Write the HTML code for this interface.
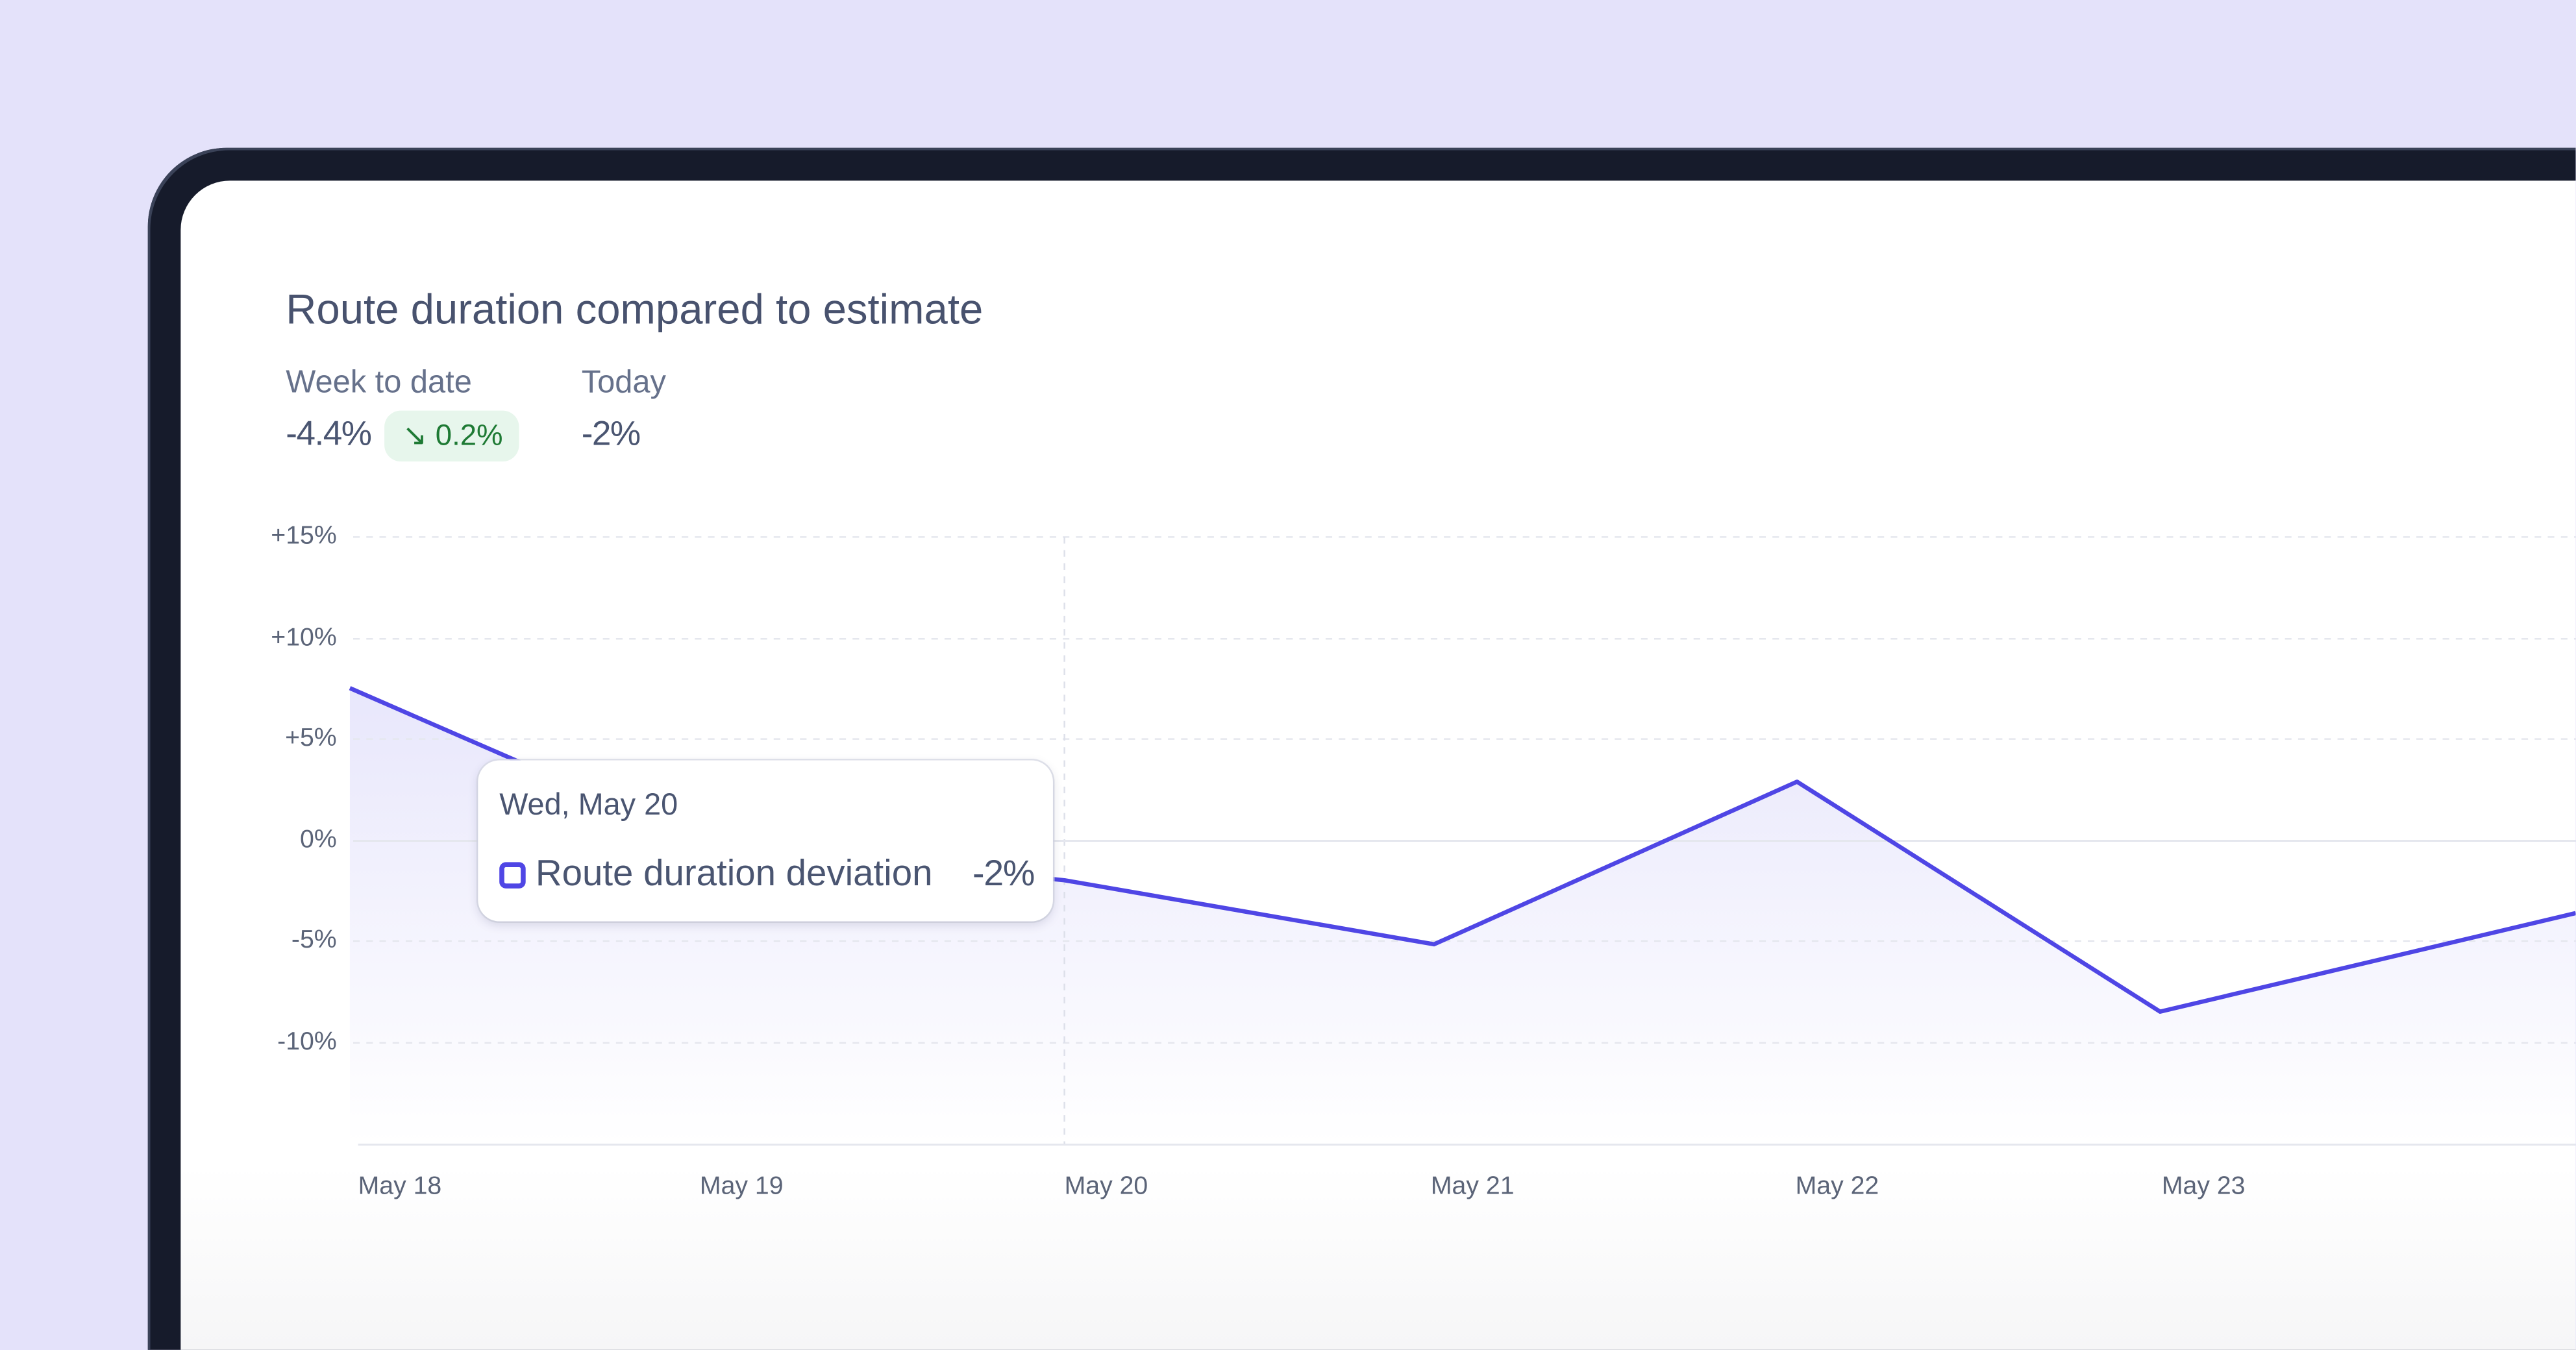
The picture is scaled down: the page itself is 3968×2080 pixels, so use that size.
<!DOCTYPE html>
<html><head><meta charset="utf-8">
<style>
html{margin:0;padding:0;width:3968px;height:2080px;overflow:hidden;}
body{margin:0;padding:0;width:3968px;height:2080px;overflow:hidden;background:#e4e2fa;font-family:"Liberation Sans",sans-serif;position:relative;}
#w{position:absolute;left:0;top:0;width:1568px;height:822px;overflow:hidden;transform:scale(2.5303);transform-origin:0 0;}
.bezel{position:absolute;left:90px;top:90px;width:1478px;height:732px;background:#161b2b;border-radius:48px 0 0 0;box-shadow:inset 1.5px 1.5px 0 0 #3a4258;}
.screen{position:absolute;left:110px;top:110px;width:1458px;height:712px;background:linear-gradient(#fff 0,#fff 600px,#f6f6f7 712px);border-radius:30px 0 0 0;overflow:hidden;}
.t{position:absolute;white-space:nowrap;color:#4a5571;}
.ax{position:absolute;font-size:15.5px;color:#5b6478;white-space:nowrap;}
</style></head><body><div id="w">
<div class="bezel"></div>
<div class="screen"></div>
<div class="t" style="left:174px;top:175px;font-size:25.8px;color:#48526e;">Route duration compared to estimate</div>
<div class="t" style="left:174px;top:223px;font-size:19.3px;color:#66718b;">Week to date</div>
<div class="t" style="left:354px;top:223px;font-size:19.3px;color:#66718b;">Today</div>
<div class="t" style="left:174px;top:253px;font-size:21px;letter-spacing:-0.6px;">-4.4%</div>
<div style="position:absolute;left:234px;top:250px;width:82px;height:31px;border-radius:10px;background:#e7f6ec;"></div>
<div class="t" style="left:245px;top:255px;font-size:18px;color:#1e7a34;">↘ 0.2%</div>
<div class="t" style="left:354px;top:253px;font-size:21px;letter-spacing:-0.6px;">-2%</div>

<svg style="position:absolute;left:0;top:0" width="1568" height="822">
<defs><linearGradient id="g" gradientUnits="userSpaceOnUse" x1="0" y1="420" x2="0" y2="697"><stop offset="0" stop-color="#4f46e5" stop-opacity="0.13"/><stop offset="1" stop-color="#4f46e5" stop-opacity="0"/></linearGradient></defs>
<path d="M213 419 L431 514 L648 536 L873 575 L1094 476 L1315 616 L1568 556 L1568 697 L213 697 Z" fill="url(#g)"/>
<g stroke="#e5e7ee" stroke-width="1" stroke-dasharray="4 4">
<line x1="215" y1="327" x2="1568" y2="327"/><line x1="215" y1="389" x2="1568" y2="389"/><line x1="215" y1="450" x2="1568" y2="450"/><line x1="215" y1="573" x2="1568" y2="573"/><line x1="215" y1="635" x2="1568" y2="635"/>
<line x1="648" y1="327" x2="648" y2="697" stroke="#dde0ea"/>
</g>
<line x1="215" y1="512" x2="1568" y2="512" stroke="#e5e7ee" stroke-width="1.2"/>
<line x1="218" y1="697" x2="1568" y2="697" stroke="#e5e7ee" stroke-width="1.2"/>
<path d="M213 419 L431 514 L648 536 L873 575 L1094 476 L1315 616 L1568 556" fill="none" stroke="#4f46e5" stroke-width="2.6" stroke-linejoin="round"/>
</svg>

<div class="ax" style="right:1363px;top:318px;">+15%</div>
<div class="ax" style="right:1363px;top:380px;">+10%</div>
<div class="ax" style="right:1363px;top:441px;">+5%</div>
<div class="ax" style="right:1363px;top:503px;">0%</div>
<div class="ax" style="right:1363px;top:564px;">-5%</div>
<div class="ax" style="right:1363px;top:626px;">-10%</div>
<div class="ax" style="left:218px;top:714px;">May 18</div>
<div class="ax" style="left:426px;top:714px;">May 19</div>
<div class="ax" style="left:648px;top:714px;">May 20</div>
<div class="ax" style="left:871px;top:714px;">May 21</div>
<div class="ax" style="left:1093px;top:714px;">May 22</div>
<div class="ax" style="left:1316px;top:714px;">May 23</div>

<div style="position:absolute;left:291px;top:463px;width:350px;height:98px;background:#fff;border-radius:13px;box-shadow:0 2px 6px rgba(40,40,90,0.15),0 0 0 1px rgba(220,222,232,0.8);"></div>
<div class="t" style="left:304px;top:479px;font-size:18.5px;">Wed, May 20</div>
<div style="position:absolute;left:304px;top:525px;width:10px;height:10px;border:3px solid #4f46e5;border-radius:4px;"></div>
<div class="t" style="left:326px;top:519px;font-size:22.3px;">Route duration deviation</div>
<div class="t" style="left:592px;top:519px;font-size:22px;letter-spacing:-0.5px;">-2%</div>
</div></body></html>
